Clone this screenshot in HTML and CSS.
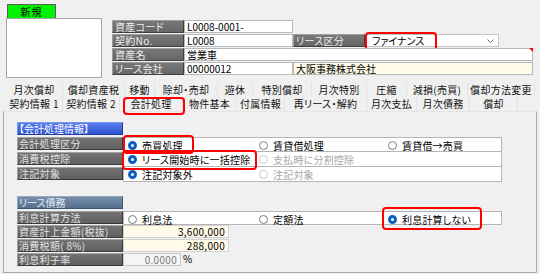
FILE: index.html
```html
<!DOCTYPE html>
<html lang="ja">
<head>
<meta charset="utf-8">
<title>リース資産</title>
<link rel="stylesheet" href="styles.css">
</head>
<body>
<div class="screen">
  <div class="top">
    <div class="thumb">
      <div class="tag">新規</div>
      <div class="thumb-box"></div>
    </div>
    <div class="fields">
      <div class="flbl">資産コード</div>
      <div class="finp">L0008-0001-</div>
      <div class="fnone span3"></div>

      <div class="flbl">契約No.</div>
      <div class="finp">L0008</div>
      <div class="flbl">リース区分</div>
      <div class="fsel hl hl-sel">
        <span>ファイナンス</span>
        <svg class="chev" width="7" height="4" viewBox="0 0 7 4"><path d="M0.5 0.5 L3.5 3.5 L6.5 0.5" fill="none" stroke="#6b6b6b" stroke-width="1"/></svg>
      </div>
      <div class="fnone"></div>

      <div class="flbl">資産名</div>
      <div class="finp span4 req">営業車</div>

      <div class="flbl">リース会社</div>
      <div class="finp">00000012</div>
      <div class="finp ylw span3">大阪事務株式会社</div>
    </div>
  </div>

  <div class="tabs">
    <div class="tab-row r1">
      <div class="tab">月次償却</div>
      <div class="tab">償却資産税</div>
      <div class="tab">移動</div>
      <div class="tab">除却・売却</div>
      <div class="tab">遊休</div>
      <div class="tab">特別償却</div>
      <div class="tab">月次特別</div>
      <div class="tab">圧縮</div>
      <div class="tab">減損(売買)</div>
      <div class="tab">償却方法変更</div>
    </div>
    <div class="tab-row r2">
      <div class="tab">契約情報 1</div>
      <div class="tab">契約情報 2</div>
      <div class="tab active hl hl-tab">会計処理</div>
      <div class="tab">物件基本</div>
      <div class="tab">付属情報</div>
      <div class="tab">再リース・解約</div>
      <div class="tab">月次支払</div>
      <div class="tab">月次債務</div>
      <div class="tab">償却</div>
    </div>
  </div>

  <div class="panel">
    <section class="sec">
      <div class="shead blue">【会計処理情報】</div>
      <div class="rows">
        <div class="row">
          <div class="slbl">会計処理区分</div>
          <div class="cell first">
            <div class="opt hl hl-a"><span class="rd on"></span>売買処理</div>
            <div class="opt"><span class="rd"></span>賃貸借処理</div>
            <div class="opt"><span class="rd"></span>賃貸借→売買</div>
          </div>
        </div>
        <div class="row">
          <div class="slbl">消費税控除</div>
          <div class="cell">
            <div class="opt hl hl-b"><span class="rd on"></span>リース開始時に一括控除</div>
            <div class="opt dis"><span class="rd off"></span>支払時に分割控除</div>
            <div class="opt"></div>
          </div>
        </div>
        <div class="row">
          <div class="slbl">注記対象</div>
          <div class="cell">
            <div class="opt"><span class="rd on"></span>注記対象外</div>
            <div class="opt dis"><span class="rd off"></span>注記対象</div>
            <div class="opt"></div>
          </div>
        </div>
      </div>
    </section>

    <section class="sec sec2">
      <div class="shead slate">リース債務</div>
      <div class="rows2">
        <div class="row2">
          <div class="slbl">利息計算方法</div>
          <div class="cell single">
            <div class="opt"><span class="rd"></span>利息法</div>
            <div class="opt"><span class="rd"></span>定額法</div>
            <div class="opt hl hl-c"><span class="rd on"></span>利息計算しない</div>
          </div>
        </div>
        <div class="row2">
          <div class="slbl">資産計上金額(税抜)</div>
          <div class="val ylw">3,600,000</div>
        </div>
        <div class="row2">
          <div class="slbl">消費税額( 8%)</div>
          <div class="val ylw">288,000</div>
        </div>
        <div class="row2">
          <div class="slbl">利息利子率</div>
          <div class="val rate">0.0000</div>
          <span class="unit">%</span>
        </div>
      </div>
    </section>
  </div>
</div>
</body>
</html>
```

FILE: styles.css
```css
* { box-sizing: border-box; margin: 0; padding: 0; }
html, body { width: 540px; height: 274px; overflow: hidden; }
body {
  background: #f0f0f0;
  font-family: "Noto Sans CJK JP", "Noto Sans", sans-serif;
  font-size: 10px;
  color: #000;
  font-feature-settings: "palt";
}
.screen { width: 540px; height: 274px; padding-top: 4px; }

/* top area */
.top { display: flex; gap: 10px; padding-left: 6px; height: 74px; }
.thumb { width: 96px; display: flex; flex-direction: column; }
.tag {
  width: 49px; height: 14px; margin-left: 1px;
  background: #00f400;
  border: 1px solid #5e5e5e; border-bottom: none;
  text-align: center; line-height: 13px;
  letter-spacing: 1px;
}
.thumb-box { width: 96px; height: 60px; background: #fff; border: 1px solid #a7a7a7; }

.fields {
  margin-top: 16px;
  display: grid;
  grid-template-columns: 72px 109px 72px 134px 34px;
  grid-auto-rows: 14px;
}
.flbl {
  margin-bottom: 1px;
  background: linear-gradient(#787878, #666);
  color: #eee;
  border: 1px solid; border-color: #9d9d9d #3f3f3f #3f3f3f #9d9d9d;
  padding-left: 2px; line-height: 11px;
  white-space: nowrap;
  letter-spacing: 0.3px;
}
.finp {
  margin-bottom: 1px;
  background: #fff;
  border: 1px solid #b9b9b9;
  padding-left: 2px; line-height: 11px;
  white-space: nowrap;
}
.span3 { grid-column: span 3; }
.span4 { grid-column: span 4; }
.ylw { background: #fffbe8; }
.req { position: relative; }
.req::after {
  content: ""; position: absolute; top: -1px; right: -1px;
  border-top: 4px solid #f00; border-left: 4px solid transparent;
}
.fsel {
  margin-bottom: 1px;
  background: #fff;
  border: 1px solid #c4c4c4;
  padding-left: 6px; line-height: 11px;
  display: flex; align-items: center; justify-content: space-between;
  padding-right: 4px;
}

/* highlight rings */
.hl { position: relative; }
.hl::after {
  content: ""; position: absolute;
  border: 2px solid #ff0000; border-radius: 4px;
  pointer-events: none;
}
.hl-sel::after { left: -1px; top: -3px; width: 68px; height: 16px; }
.hl-tab::after { left: 3px; top: 0; width: 58px; height: 14px; }
.hl-a::after { left: -5px; top: -3px; width: 67px; height: 15px; }
.hl-b::after { left: -6px; top: -2px; width: 131px; height: 16px; }
.hl-c::after { left: -6px; top: -5px; width: 96px; height: 19px; }

/* tabs */
.tabs { margin-top: 5px; padding-left: 6px; }
.tab-row { display: grid; height: 14px; }
.tab-row.r1 { grid-template-columns: 57px 62px 30px 63px 35px 59px 55px 40px 61px 67px; }
.tab-row.r2 { grid-template-columns: 57px 57px 63px 54px 48px 82px 50px 53px 48px; }
.tab {
  text-align: center; line-height: 14px;
  border-right: 1px solid #e2e2e2;
  white-space: nowrap; color: #111;
  letter-spacing: 0.3px;
}

/* panel */
.panel {
  margin: 0 3px;
  height: 162px;
  border: 1px solid #a9a9a9;
  border-top-color: #e6e6e6;
  padding: 10px 0 0 13px;
}
.shead {
  width: 106px; height: 13px; line-height: 12px;
  padding-left: 1px; color: #fff;
  border: 1px solid;
}
.shead.blue {
  background: linear-gradient(#587eee, #2d52cf);
  border-color: #7b97f0 #1f3aa3 #1f3aa3 #7b97f0;
}
.shead.slate {
  background: linear-gradient(#7890ad, #566f8e);
  border-color: #96a8bf #3f546f #3f546f #96a8bf;
  color: #e6edf5;
}
.rows { margin-top: 2px; }
.row { display: flex; height: 15px; }
.slbl {
  width: 106px; height: 13px;
  background: linear-gradient(#737373, #5f5f5f);
  color: #e2e2e2;
  border: 1px solid; border-color: #a3a3a3 #3a3a3a #3a3a3a #a3a3a3;
  padding-left: 1px; line-height: 11px;
  white-space: nowrap; flex: none;
  letter-spacing: 0.3px;
}
.cell {
  width: 379px;
  background: #fff;
  border: 1px solid #b5b5b5; border-top: none;
  display: grid;
  grid-template-columns: 131px 129px 1fr;
  padding-left: 4px;
}
.cell.first { border-top: 1px solid #b5b5b5; }
.opt { display: flex; align-items: center; gap: 5px; white-space: nowrap; letter-spacing: 0.2px; }
.opt.dis { color: #a5a5a5; }
.rd {
  width: 9px; height: 9px; border-radius: 50%;
  border: 1px solid #7d7d7d; background: #fff; flex: none;
}
.rd.on { border: 3px solid #0a5fc0; }
.rd.off { border-color: #c9c9c9; }

.sec2 { margin-top: 14px; }
.rows2 { margin-top: 2px; }
.row2 { display: flex; height: 14px; align-items: flex-start; }
.cell.single { height: 14px; border-top: 1px solid #b5b5b5; }
.val {
  width: 106px; height: 13px;
  border: 1px solid #d2d2d2;
  text-align: right; padding-right: 3px;
  line-height: 11px;
  letter-spacing: 0.3px;
}
.val.rate { width: 58px; background: #f6f6f6; color: #7a7a7a; border-color: #c8c8c8; }
.unit { margin-left: 2px; line-height: 12px; }
```
